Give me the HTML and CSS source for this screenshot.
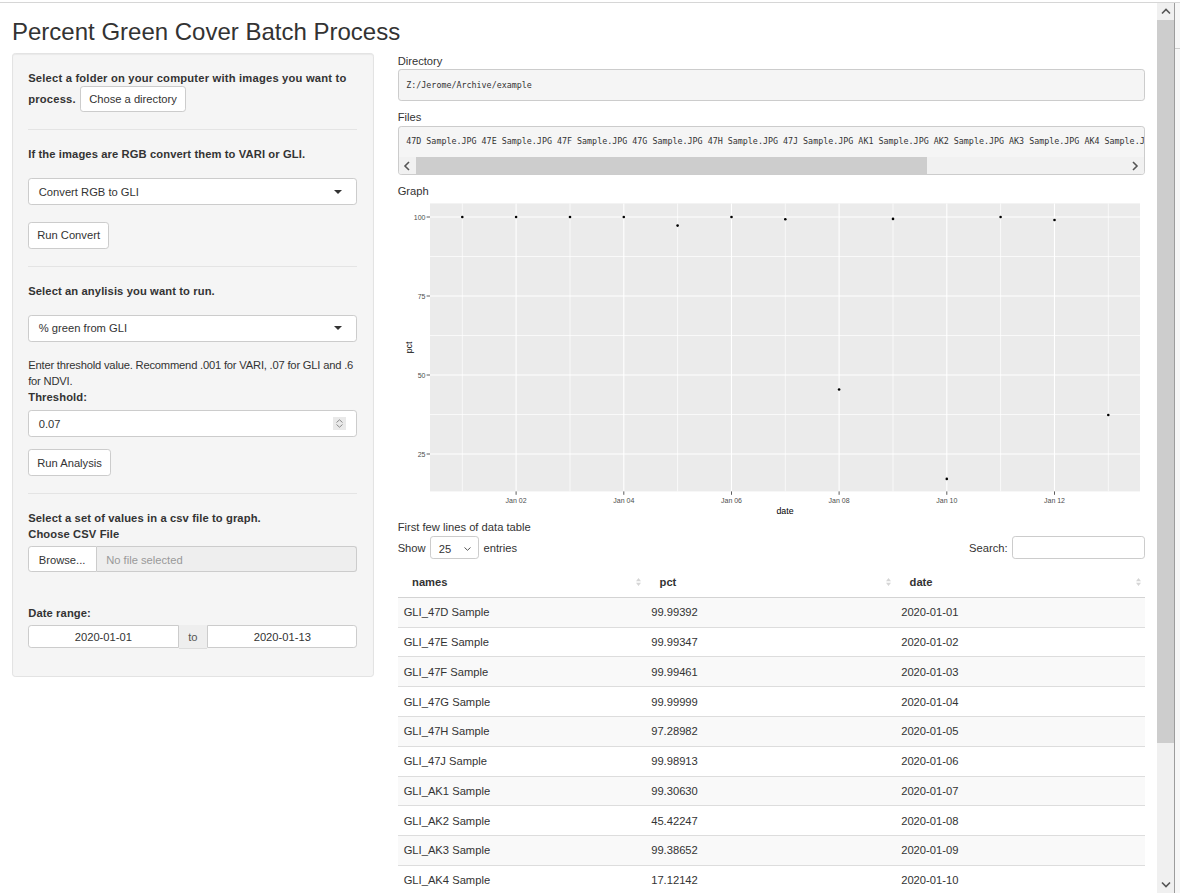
FILE: index.html
```html
<!DOCTYPE html>
<html lang="en">
<head>
<meta charset="utf-8">
<title>Percent Green Cover Batch Process</title>
<link rel="stylesheet" href="styles.css">
</head>
<body>
<div class="window">
  <div class="chrome-top"></div>
  <div class="screen">
    <div class="page">
      <div class="container">
        <h2 class="title">Percent Green Cover Batch Process</h2>
        <div class="row">
          <div class="sidebar">
            <div class="well">
              <div class="dir-prompt">Select a folder on your computer with images you want to process. <span class="btn btn-dir">Chose a directory</span></div>
              <hr class="sep sep-1">
              <div class="lbl gap-16">If the images are RGB convert them to VARI or GLI.</div>
              <div class="select gap-17">
                <span>Convert RGB to GLI</span>
                <svg class="caret" width="8" height="4" viewBox="0 0 8 4"><path d="M0 0H8L4 4Z" fill="#333"/></svg>
              </div>
              <span class="btn">Run Convert</span>
              <hr class="sep">
              <div class="lbl gap-16">Select an anylisis you want to run.</div>
              <div class="select">
                <span>% green from GLI</span>
                <svg class="caret" width="8" height="4" viewBox="0 0 8 4"><path d="M0 0H8L4 4Z" fill="#333"/></svg>
              </div>
              <div class="help">Enter threshold value. Recommend .001 for VARI, .07 for GLI and .6 for NDVI.</div>
              <div class="lbl gap-5">Threshold:</div>
              <div class="num gap-12">
                <span>0.07</span>
                <span class="spin">
                  <svg width="7" height="4" viewBox="0 0 7 4"><path d="M0.5 3.5L3.5 0.8L6.5 3.5" fill="none" stroke="#8a8a8a" stroke-width="1"/></svg>
                  <svg width="7" height="4" viewBox="0 0 7 4"><path d="M0.5 0.5L3.5 3.2L6.5 0.5" fill="none" stroke="#8a8a8a" stroke-width="1"/></svg>
                </span>
              </div>
              <span class="btn btn-tall">Run Analysis</span>
              <hr class="sep">
              <div class="lbl">Select a set of values in a csv file to graph.</div>
              <div class="lbl gap-4">Choose CSV File</div>
              <div class="file-group">
                <span class="browse">Browse...</span>
                <span class="file-field">No file selected</span>
              </div>
              <div class="lbl gap-5">Date range:</div>
              <div class="date-group">
                <span class="date-in date-left">2020-01-01</span>
                <span class="date-to">to</span>
                <span class="date-in date-right">2020-01-13</span>
              </div>
            </div>
          </div>
          <div class="main">
            <div class="plain">Directory</div>
            <div class="out">Z:/Jerome/Archive/example</div>
            <div class="plain">Files</div>
            <div class="out files">
              <div class="files-text">47D Sample.JPG 47E Sample.JPG 47F Sample.JPG 47G Sample.JPG 47H Sample.JPG 47J Sample.JPG AK1 Sample.JPG AK2 Sample.JPG AK3 Sample.JPG AK4 Sample.JPG AK5 Sample.JPG AK6 Sample.JPG AK7 Sample.JPG</div>
              <div class="hscroll">
                <span class="sb-btn"><svg width="8" height="10" viewBox="0 0 8 10"><path d="M6 1L2 5L6 9" fill="none" stroke="#555" stroke-width="1.6"/></svg></span>
                <span class="sb-thumb-h"></span>
                <span class="sb-track"></span>
                <span class="sb-btn"><svg width="8" height="10" viewBox="0 0 8 10"><path d="M2 1L6 5L2 9" fill="none" stroke="#555" stroke-width="1.6"/></svg></span>
              </div>
            </div>
            <div class="plain">Graph</div>
            <svg class="plot" width="747" height="320" viewBox="0 0 747 320">
              <rect x="32" y="4.4" width="710" height="288" fill="#ebebeb"/>
              <g stroke="#fff" stroke-width="0.7">
                <line x1="32" x2="742" y1="57.5" y2="57.5"/>
                <line x1="32" x2="742" y1="136.5" y2="136.5"/>
                <line x1="32" x2="742" y1="215.5" y2="215.5"/>
                <line y1="4.4" y2="292.4" x1="64.3" x2="64.3"/>
                <line y1="4.4" y2="292.4" x1="172" x2="172"/>
                <line y1="4.4" y2="292.4" x1="279.6" x2="279.6"/>
                <line y1="4.4" y2="292.4" x1="387.3" x2="387.3"/>
                <line y1="4.4" y2="292.4" x1="495" x2="495"/>
                <line y1="4.4" y2="292.4" x1="602.6" x2="602.6"/>
                <line y1="4.4" y2="292.4" x1="710.3" x2="710.3"/>
              </g>
              <g stroke="#fff" stroke-width="1.1">
                <line x1="32" x2="742" y1="18" y2="18"/>
                <line x1="32" x2="742" y1="97" y2="97"/>
                <line x1="32" x2="742" y1="176" y2="176"/>
                <line x1="32" x2="742" y1="255" y2="255"/>
                <line y1="4.4" y2="292.4" x1="118.1" x2="118.1"/>
                <line y1="4.4" y2="292.4" x1="225.8" x2="225.8"/>
                <line y1="4.4" y2="292.4" x1="333.5" x2="333.5"/>
                <line y1="4.4" y2="292.4" x1="441.1" x2="441.1"/>
                <line y1="4.4" y2="292.4" x1="548.8" x2="548.8"/>
                <line y1="4.4" y2="292.4" x1="656.5" x2="656.5"/>
              </g>
              <g stroke="#333" stroke-width="0.8">
                <line x1="28.6" x2="32" y1="18" y2="18"/>
                <line x1="28.6" x2="32" y1="97" y2="97"/>
                <line x1="28.6" x2="32" y1="176" y2="176"/>
                <line x1="28.6" x2="32" y1="255" y2="255"/>
                <line y1="292.4" y2="295.8" x1="118.1" x2="118.1"/>
                <line y1="292.4" y2="295.8" x1="225.8" x2="225.8"/>
                <line y1="292.4" y2="295.8" x1="333.5" x2="333.5"/>
                <line y1="292.4" y2="295.8" x1="441.1" x2="441.1"/>
                <line y1="292.4" y2="295.8" x1="548.8" x2="548.8"/>
                <line y1="292.4" y2="295.8" x1="656.5" x2="656.5"/>
              </g>
              <g class="tick" text-anchor="end">
                <text x="27.5" y="20.5">100</text>
                <text x="27.5" y="99.5">75</text>
                <text x="27.5" y="178.5">50</text>
                <text x="27.5" y="257.5">25</text>
              </g>
              <g class="tick" text-anchor="middle">
                <text x="118.1" y="303.6">Jan 02</text>
                <text x="225.8" y="303.6">Jan 04</text>
                <text x="333.5" y="303.6">Jan 06</text>
                <text x="441.1" y="303.6">Jan 08</text>
                <text x="548.8" y="303.6">Jan 10</text>
                <text x="656.5" y="303.6">Jan 12</text>
              </g>
              <text class="axis-title" x="387" y="314.6" text-anchor="middle">date</text>
              <text class="axis-title" transform="translate(14,148.4) rotate(-90)" text-anchor="middle">pct</text>
              <g fill="#000">
                <circle cx="64.3" cy="18" r="1.3"/>
                <circle cx="118.1" cy="18" r="1.3"/>
                <circle cx="172" cy="18" r="1.3"/>
                <circle cx="225.8" cy="18" r="1.3"/>
                <circle cx="279.6" cy="26.6" r="1.3"/>
                <circle cx="333.5" cy="18" r="1.3"/>
                <circle cx="387.3" cy="20.2" r="1.3"/>
                <circle cx="441.1" cy="190.5" r="1.3"/>
                <circle cx="495" cy="19.9" r="1.3"/>
                <circle cx="548.8" cy="279.9" r="1.3"/>
                <circle cx="602.6" cy="18" r="1.3"/>
                <circle cx="656.5" cy="21" r="1.3"/>
                <circle cx="710.3" cy="216" r="1.3"/>
              </g>
            </svg>
            <div class="plain">First few lines of data table</div>
            <div class="dt-top">
              <div class="dt-length">Show <span class="len-select"><span>25</span><svg width="7" height="4" viewBox="0 0 7 4"><path d="M0.5 0.5L3.5 3.3L6.5 0.5" fill="none" stroke="#555" stroke-width="1"/></svg></span> entries</div>
              <div class="dt-search">Search: <span class="search-box"></span></div>
            </div>
            <table class="dt">
              <colgroup><col class="c1"><col class="c2"><col class="c3"></colgroup>
              <thead>
                <tr>
                  <th><div class="th-in"><span>names</span><svg class="sort" width="5" height="8" viewBox="0 0 5 8"><path d="M0 3.2L2.5 0L5 3.2Z M0 4.8L2.5 8L5 4.8Z" fill="#d6d6d6"/></svg></div></th>
                  <th><div class="th-in"><span>pct</span><svg class="sort" width="5" height="8" viewBox="0 0 5 8"><path d="M0 3.2L2.5 0L5 3.2Z M0 4.8L2.5 8L5 4.8Z" fill="#d6d6d6"/></svg></div></th>
                  <th><div class="th-in"><span>date</span><svg class="sort" width="5" height="8" viewBox="0 0 5 8"><path d="M0 3.2L2.5 0L5 3.2Z M0 4.8L2.5 8L5 4.8Z" fill="#d6d6d6"/></svg></div></th>
                </tr>
              </thead>
              <tbody>
                <tr><td>GLI_47D Sample</td><td>99.99392</td><td>2020-01-01</td></tr>
                <tr><td>GLI_47E Sample</td><td>99.99347</td><td>2020-01-02</td></tr>
                <tr><td>GLI_47F Sample</td><td>99.99461</td><td>2020-01-03</td></tr>
                <tr><td>GLI_47G Sample</td><td>99.99999</td><td>2020-01-04</td></tr>
                <tr><td>GLI_47H Sample</td><td>97.28982</td><td>2020-01-05</td></tr>
                <tr><td>GLI_47J Sample</td><td>99.98913</td><td>2020-01-06</td></tr>
                <tr><td>GLI_AK1 Sample</td><td>99.30630</td><td>2020-01-07</td></tr>
                <tr><td>GLI_AK2 Sample</td><td>45.42247</td><td>2020-01-08</td></tr>
                <tr><td>GLI_AK3 Sample</td><td>99.38652</td><td>2020-01-09</td></tr>
                <tr><td>GLI_AK4 Sample</td><td>17.12142</td><td>2020-01-10</td></tr>
                <tr><td>GLI_AK5 Sample</td><td>99.99120</td><td>2020-01-11</td></tr>
              </tbody>
            </table>
          </div>
        </div>
      </div>
    </div>
    <div class="vscroll">
      <span class="vs-btn"><svg width="10" height="7" viewBox="0 0 10 7"><path d="M1 5.5L5 1.5L9 5.5" fill="none" stroke="#555" stroke-width="1.6"/></svg></span>
      <span class="vs-thumb"></span>
      <span class="vs-track"></span>
      <span class="vs-btn"><svg width="10" height="7" viewBox="0 0 10 7"><path d="M1 1.5L5 5.5L9 1.5" fill="none" stroke="#555" stroke-width="1.6"/></svg></span>
    </div>
    <div class="sliver"><div class="sliver-bar"></div></div>
  </div>
</div>
</body>
</html>
```

FILE: styles.css
```css
html, body {
  margin: 0;
  padding: 0;
}
body {
  font-family: "Liberation Sans", Arial, Helvetica, sans-serif;
  font-size: 11.2px;
  line-height: 16px;
  color: #333;
  background: #fff;
  overflow: hidden;
}
.window {
  width: 1180px;
  height: 893px;
  display: flex;
  flex-direction: column;
}
.chrome-top {
  flex: none;
  height: 2px;
  border-bottom: 1px solid #d6d6d6;
  background: #fff;
}
.screen {
  flex: 1;
  min-height: 0;
  display: flex;
}
.page {
  flex: none;
  width: 1157px;
  overflow: hidden;
}
.container {
  padding: 0 12px;
}
.title {
  font-size: 24px;
  line-height: 26.4px;
  font-weight: 500;
  margin: 16px 0 8px;
  color: #333;
}
.row {
  display: flex;
  align-items: flex-start;
  margin: 0 -12px;
}
.sidebar {
  flex: none;
  width: 385.67px;
  padding: 0 12px;
  box-sizing: border-box;
}
.main {
  flex: none;
  width: 771.33px;
  padding: 0 12px;
  box-sizing: border-box;
}

/* sidebar well */
.well {
  background: #f5f5f5;
  border: 1px solid #e3e3e3;
  border-radius: 3.2px;
  padding: 15.2px 15.2px 27.2px;
  box-shadow: inset 0 1px 1px rgba(0, 0, 0, 0.05);
}
.dir-prompt {
  font-weight: bold;
  letter-spacing: 0.2px;
}
.btn {
  display: inline-block;
  box-sizing: border-box;
  height: 26.4px;
  padding: 4.2px 8px;
  border: 1px solid #ccc;
  border-radius: 3.2px;
  background: #fff;
  color: #333;
  font-weight: normal;
  letter-spacing: 0;
  line-height: 16px;
  vertical-align: baseline;
}
.btn-dir {
  height: 26px;
  margin-left: 1px;
  padding-top: 4px;
}
.btn-tall {
  height: 27px;
  padding-top: 4.6px;
}
.sep {
  border: 0;
  border-top: 1px solid #e4e4e4;
  margin: 17px 0 16px;
  height: 0;
}
.sep-1 {
  margin-top: 17.4px;
}
.lbl {
  display: block;
  font-weight: bold;
  letter-spacing: 0.11px;
}
.gap-16 { margin-bottom: 16px; }
.gap-17 { margin-bottom: 17px; }
.gap-12 { margin-bottom: 11.8px; }
.gap-5 { margin-bottom: 4.8px; }
.gap-4 { margin-bottom: 4px; }

.select {
  display: flex;
  align-items: center;
  justify-content: space-between;
  box-sizing: border-box;
  height: 27.2px;
  padding: 0 14.4px 0 9.6px;
  background: #fff;
  border: 1px solid #ccc;
  border-radius: 3.2px;
}
.caret {
  display: block;
  flex: none;
}
.help {
  margin-top: 15.6px;
  letter-spacing: -0.2px;
}
.num {
  display: flex;
  align-items: center;
  justify-content: space-between;
  box-sizing: border-box;
  height: 27.2px;
  padding: 0 10px 0 9.6px;
  background: #fff;
  border: 1px solid #ccc;
  border-radius: 3.2px;
}
.spin {
  width: 13px;
  height: 13px;
  background: #e9e9e9;
  display: flex;
  flex-direction: column;
  align-items: center;
  justify-content: center;
  gap: 1.5px;
}
.spin svg {
  display: block;
}
.file-group {
  display: flex;
  height: 26px;
  margin-bottom: 32.4px;
}
.browse {
  flex: none;
  box-sizing: border-box;
  width: 68.4px;
  padding: 4.4px 0 0 9.6px;
  background: #fff;
  border: 1px solid #ccc;
  border-radius: 3.2px 0 0 3.2px;
}
.file-field {
  flex: 1;
  box-sizing: border-box;
  padding: 4.4px 9.6px 0;
  background: #eee;
  border: 1px solid #ccc;
  border-left: 0;
  border-radius: 0 3.2px 3.2px 0;
  color: #999;
}
.date-group {
  display: flex;
  height: 23px;
}
.date-in {
  flex: 1;
  box-sizing: border-box;
  background: #fff;
  border: 1px solid #ccc;
  text-align: center;
  padding-top: 3px;
}
.date-left {
  border-radius: 3.2px 0 0 3.2px;
}
.date-right {
  border-radius: 0 3.2px 3.2px 0;
}
.date-to {
  flex: none;
  box-sizing: border-box;
  width: 28.6px;
  height: 24px;
  background: #eee;
  border-bottom: 1px solid #ddd;
  color: #555;
  text-align: center;
  padding-top: 3.5px;
}

/* main column */
.plain {
  line-height: 16px;
}
.out {
  margin: 0 0 7.6px;
  padding: 7.6px;
  border: 1px solid #ccc;
  border-radius: 3.2px;
  background: #f5f5f5;
  font-family: "DejaVu Sans Mono", "Liberation Mono", monospace;
  font-size: 8.35px;
  line-height: 14.5px;
  color: #333;
  white-space: pre;
  overflow: hidden;
}
.files {
  padding: 0;
  margin-top: 1px;
  white-space: normal;
}
.files-text {
  padding: 7.6px 7.6px 8.3px;
  white-space: pre;
  overflow: hidden;
}
.hscroll {
  display: flex;
  height: 17px;
  background: #f1f1f1;
}
.sb-btn {
  flex: none;
  width: 17px;
  height: 17px;
  display: flex;
  align-items: center;
  justify-content: center;
}
.sb-btn svg {
  display: block;
}
.sb-thumb-h {
  flex: none;
  width: 511.7px;
  background: #cdcdcd;
}
.sb-track {
  flex: 1;
}
.plot {
  display: block;
}
.tick {
  font-family: "Liberation Sans", Arial, sans-serif;
  font-size: 7px;
  fill: #4d4d4d;
}
.axis-title {
  font-family: "Liberation Sans", Arial, sans-serif;
  font-size: 8.8px;
  fill: #000;
}

/* data table */
.dt-top {
  display: flex;
  justify-content: space-between;
  align-items: center;
  height: 23px;
  margin-top: 1.6px;
}
.dt-length,
.dt-search {
  display: flex;
  align-items: center;
}
.len-select {
  display: inline-flex;
  align-items: center;
  justify-content: space-between;
  box-sizing: border-box;
  width: 49px;
  height: 23px;
  margin: 0 4.6px 0 4.2px;
  padding: 2px 7px 0 8px;
  background: #fff;
  border: 1px solid #ccc;
  border-radius: 3.2px;
}
.len-select svg {
  display: block;
}
.search-box {
  display: inline-block;
  box-sizing: border-box;
  width: 133px;
  height: 23px;
  margin-left: 4.4px;
  background: #fff;
  border: 1px solid #ccc;
  border-radius: 3.2px;
}
.dt {
  width: 100%;
  table-layout: fixed;
  border-collapse: collapse;
  margin-top: 6.2px;
}
.c1 { width: 247.5px; }
.c2 { width: 250px; }
.c3 { width: 249.8px; }
.dt th {
  text-align: left;
  font-weight: bold;
  padding: 8.4px 4px 7px 14.4px;
  border-bottom: 1px solid #d3d3d3;
}
.th-in {
  display: flex;
  justify-content: space-between;
  align-items: center;
}
.sort {
  display: block;
}
.dt td {
  padding: 6.4px 6px;
  border-top: 1px solid #ddd;
  white-space: nowrap;
}
.dt tbody tr:first-child td {
  border-top: 0;
}
.dt tbody tr:nth-child(odd) {
  background: #f9f9f9;
}

/* page scrollbar and neighbouring window edge */
.vscroll {
  flex: none;
  width: 17px;
  display: flex;
  flex-direction: column;
  background: #f0f0f0;
}
.vs-btn {
  flex: none;
  height: 17px;
  display: flex;
  align-items: center;
  justify-content: center;
}
.vs-btn svg {
  display: block;
}
.vs-thumb {
  flex: none;
  height: 723px;
  background: #cdcdcd;
}
.vs-track {
  flex: 1;
}
.sliver {
  flex: 1;
  background: #f7f7f7;
  border-left: 1px solid #9d9d9d;
  padding-top: 45px;
}
.sliver-bar {
  height: 0;
  border-top: 1px solid #cfcfcf;
}
```
